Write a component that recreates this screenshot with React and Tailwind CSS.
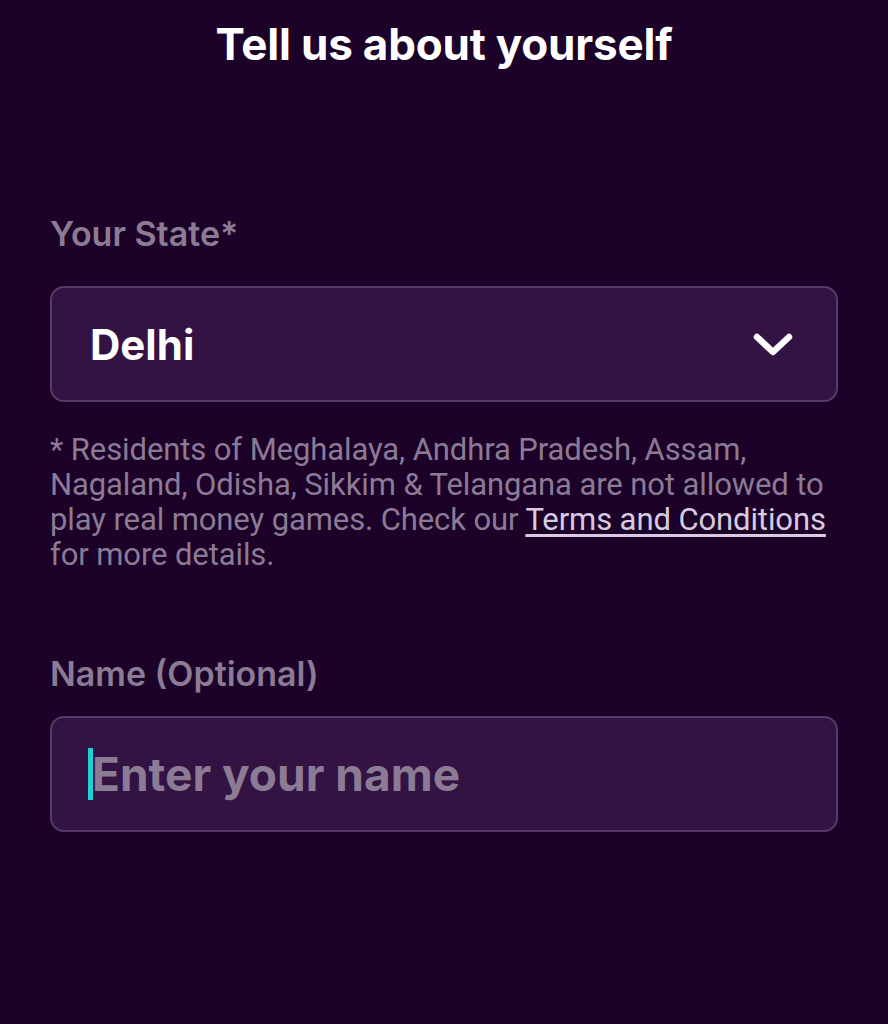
import { useState } from 'react';

export default function App() {
  const [name, setName] = useState('');

  return (
    <div className="min-h-[1024px] w-full bg-[#1c0229] px-[50px] pt-[18px] font-['Inter',sans-serif]">
      <h1 className="text-center text-[44px] font-bold leading-[52px] tracking-[-0.2px] text-white">
        Tell us about yourself
      </h1>

      <div className="mt-[144px]">
        <label className="block text-[34px] font-semibold leading-[40px] text-[#8b7b95]">Your State*</label>
        <div className="mt-[32px] flex h-[116px] items-center justify-between rounded-[14px] border-2 border-[#563b66] bg-[#321344] pl-[38px] pr-[42px]">
          <span className="text-[42px] font-bold text-white">Delhi</span>
          <svg width="42" height="30" viewBox="0 0 42 30" fill="none">
            <path d="M5 8 L21 23 L37 8" stroke="white" strokeWidth="6.5" strokeLinecap="round" strokeLinejoin="round" />
          </svg>
        </div>
        <p className="mt-[30px] font-['Roboto',sans-serif] text-[31px] leading-[35px] tracking-[-0.1px] text-[#8b7b95]">
          * Residents of Meghalaya, Andhra Pradesh, Assam, Nagaland, Odisha, Sikkim &amp; Telangana are not allowed to play real money games. Check our{' '}
          <a href="#" className="text-[#d8cbe0] underline underline-offset-4">Terms and Conditions</a> for more details.
        </p>
      </div>

      <div className="mt-[82px]">
        <label className="block text-[34px] font-semibold leading-[40px] text-[#8b7b95]">Name (Optional)</label>
        <div className="mt-[22px] flex h-[116px] items-center rounded-[14px] border-2 border-[#563b66] bg-[#321344] pl-[36px] pr-[36px]">
          <span className="h-[52px] w-[5px] shrink-0 bg-[#1fd1d1]" />
          <input
            value={name}
            onChange={(e) => setName(e.target.value)}
            placeholder="Enter your name"
            className="-ml-[1px] w-full bg-transparent text-[46px] font-bold text-white outline-none placeholder:text-[#8b7b95]"
          />
        </div>
      </div>
    </div>
  );
}
